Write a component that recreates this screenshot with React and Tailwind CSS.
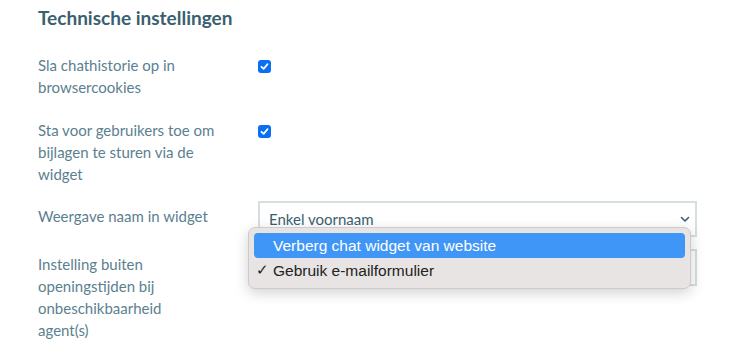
import React from "react"

function Check() {
  return (
    <span className="mt-[6px] flex h-[13px] w-[13px] items-center justify-center rounded-[3px] bg-[#0b6ff3]">
      <svg width="9" height="9" viewBox="0 0 10 10" fill="none">
        <path d="M1.6 5.3 L4 7.6 L8.4 2.4" stroke="white" strokeWidth="1.9" strokeLinecap="round" strokeLinejoin="round" />
      </svg>
    </span>
  )
}

function Chevron() {
  return (
    <svg width="10" height="7" viewBox="0 0 10 7" fill="none">
      <path d="M1.5 1.5 L5 5 L8.5 1.5" stroke="#3a5f70" strokeWidth="1.6" strokeLinecap="round" strokeLinejoin="round" />
    </svg>
  )
}

function Row({ label, children, className = "" }) {
  return (
    <div className={`flex ${className}`}>
      <div className="w-[220px] shrink-0">
        <div className="w-[177px] text-[15px] leading-[22px] text-[#5b7f90]">{label}</div>
      </div>
      <div className="flex-1">{children}</div>
    </div>
  )
}

export default function App() {
  return (
    <div className="relative h-[353px] w-[748px] overflow-hidden bg-white font-['Lato',sans-serif]">
      <div className="pl-[38px] pr-[51px] pt-[5px]">
        <h2 className="text-[19px] font-bold leading-[26px] text-[#3a5f70]">Technische instellingen</h2>

        <Row label="Sla chathistorie op in browsercookies" className="mt-[23px]">
          <Check />
        </Row>

        <Row label="Sta voor gebruikers toe om bijlagen te sturen via de widget" className="mt-[21px]">
          <Check />
        </Row>

        <Row label={<div className="pt-[4px]">Weergave naam in widget</div>} className="mt-[16px]">
          <div className="flex h-[36px] items-center justify-between border-2 border-[#d5dfe2] pl-[9px] pr-[5px] text-[15px] text-[#3a5f70]">
            <span>Enkel voornaam</span>
            <Chevron />
          </div>
        </Row>

        <Row
          label={<div className="pt-[4px]">Instelling buiten openingstijden bij onbeschikbaarheid agent(s)</div>}
          className="mt-[12px]"
        >
          <div className="flex h-[37px] items-center justify-between border-2 border-[#d5dfe2] pl-[9px] pr-[5px] text-[15px] text-[#3a5f70]">
            <span>Gebruik e-mailformulier</span>
            <Chevron />
          </div>
        </Row>
      </div>

      <div className="absolute left-[248px] top-[227px] w-[443px] rounded-[7px] border border-[#cfcaca] bg-[#e8e4e4] px-[5px] py-[5px] font-['Liberation_Sans',sans-serif] text-[15.5px] text-[#222] shadow-[0_4px_14px_rgba(0,0,0,0.18)]">
        <div className="flex h-[25px] items-center rounded-[4px] bg-[#3f96f7] pl-[19px] text-white">
          Verberg chat widget van website
        </div>
        <div className="flex h-[25px] items-center">
          <span className="w-[19px] pl-[2px] text-[15px]">✓</span>
          <span>Gebruik e-mailformulier</span>
        </div>
      </div>
    </div>
  )
}
